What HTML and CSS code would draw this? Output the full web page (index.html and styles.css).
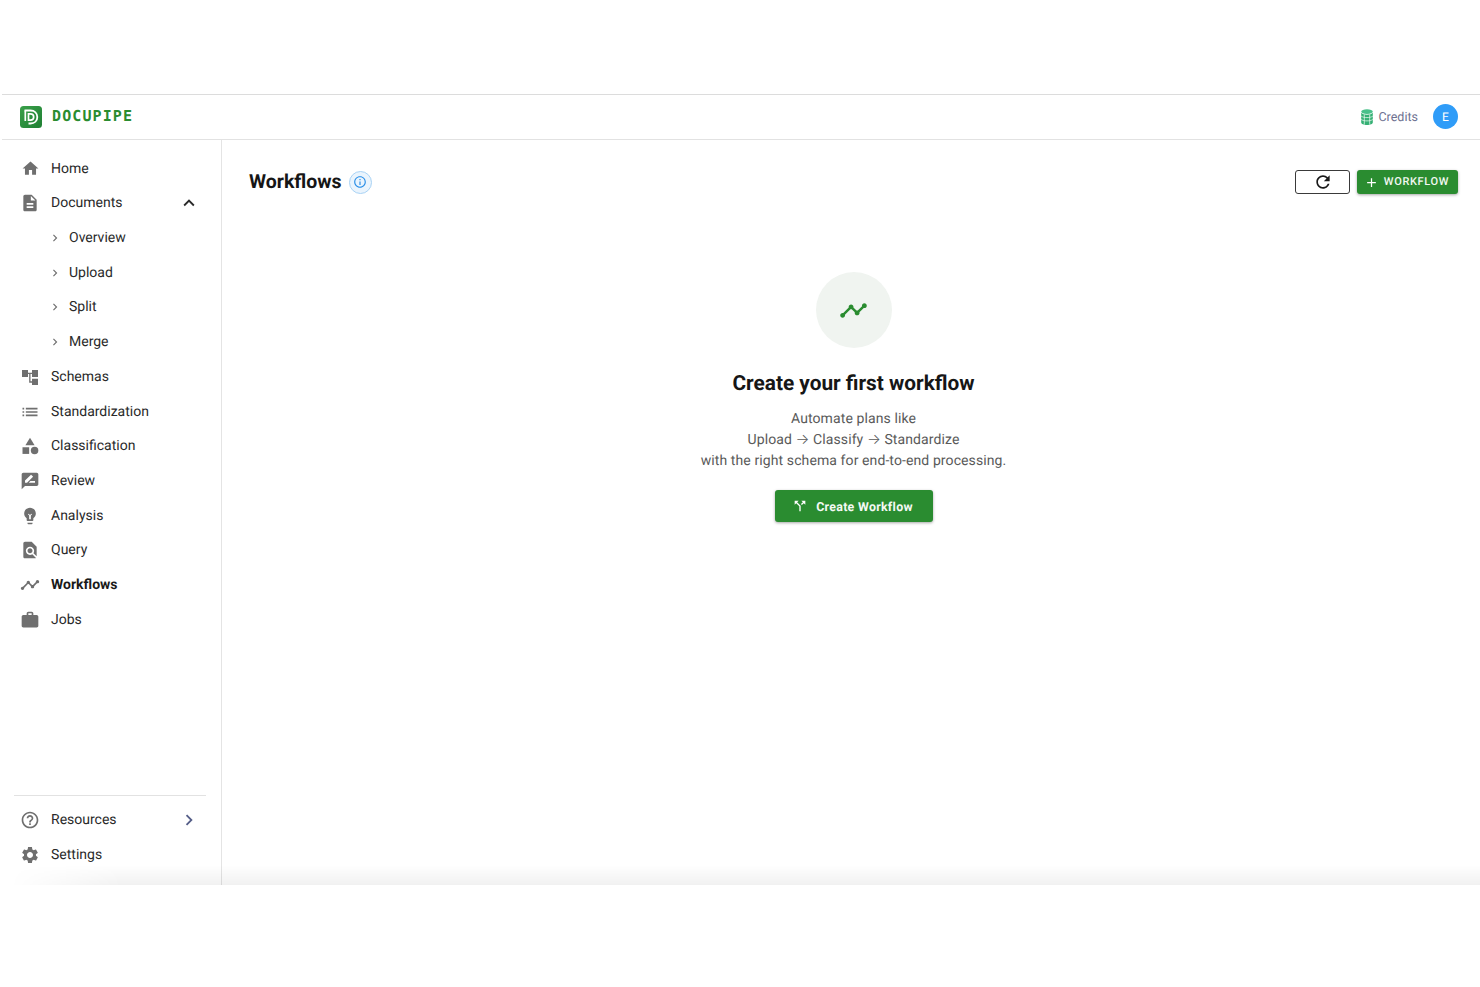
FILE: index.html
```html
<!DOCTYPE html>
<html lang="en">
<head>
<meta charset="utf-8">
<title>Workflows - DocuPipe</title>
<link rel="stylesheet" href="styles.css">
</head>
<body>
<div class="frame">
  <header class="topbar">
    <div class="brand">
      <svg class="logo" viewBox="0 0 22 22"><defs><linearGradient id="lg" x1="0" y1="0" x2="1" y2="1"><stop offset="0" stop-color="#3aa04a"/><stop offset="1" stop-color="#1f7f33"/></linearGradient></defs><rect width="22" height="22" rx="3.500" fill="url(#lg)"/><path d="M4.500 4.500h6c4 0 6.800 2.600 6.800 6.500s-2.800 6.500-6.800 6.500H8.500" fill="none" stroke="#fff" stroke-width="1.800"/><path d="M5.300 4.500v10.500M8.500 7.800h1.800c2 0 3.400 1.200 3.400 3.200s-1.400 3.200-3.400 3.200H8.500z" fill="none" stroke="#fff" stroke-width="1.700"/></svg>
      <span class="brand-name">DOCUPIPE</span>
    </div>
    <div class="top-actions">
      <svg class="credits-icon" viewBox="0 0 12 16"><ellipse cx="6" cy="2.600" rx="5.800" ry="2.400" fill="#49c08a"/><path d="M.2 3.800c1 1.200 3 1.900 5.800 1.900s4.800-.7 5.800-1.900v9.600c0 1.400-2.600 2.500-5.800 2.500S.2 14.800.2 13.400z" fill="#35b074"/><path d="M.2 7.200c1.500 1 3.500 1.400 5.800 1.400s4.300-.4 5.800-1.400M.2 10.500c1.500 1 3.500 1.400 5.800 1.400s4.300-.4 5.800-1.400M3.300 5.500v10M8.700 5.500v10" stroke="#e8f7ef" stroke-width=".75" fill="none"/></svg>
      <span class="credits">Credits</span>
      <span class="avatar">E</span>
    </div>
  </header>
  <div class="body">
    <aside class="sidebar">
      <nav class="nav">
        <a class="item"><svg class="ico home" viewBox="0 0 24 24"><path d="M10 20v-6h4v6h5v-8h3L12 3 2 12h3v8z"/></svg><span>Home</span></a>
        <a class="item"><svg class="ico" viewBox="0 0 24 24"><path d="M14 2H6c-1.100 0-1.990.9-1.990 2L4 20c0 1.100.89 2 1.990 2H18c1.100 0 2-.9 2-2V8l-6-6zm2 16H8v-2h8v2zm0-4H8v-2h8v2zm-3-5V3.500L18.500 9H13z"/></svg><span>Documents</span><svg class="end dark" viewBox="0 0 24 24"><path d="M12 8l-6 6 1.410 1.410L12 10.830l4.590 4.580L18 14z"/></svg></a>
        <a class="item sub"><svg class="chev" viewBox="0 0 24 24"><path d="M10 6L8.590 7.410 13.170 12l-4.580 4.590L10 18l6-6z"/></svg><span>Overview</span></a>
        <a class="item sub"><svg class="chev" viewBox="0 0 24 24"><path d="M10 6L8.590 7.410 13.170 12l-4.580 4.590L10 18l6-6z"/></svg><span>Upload</span></a>
        <a class="item sub"><svg class="chev" viewBox="0 0 24 24"><path d="M10 6L8.590 7.410 13.170 12l-4.580 4.590L10 18l6-6z"/></svg><span>Split</span></a>
        <a class="item sub"><svg class="chev" viewBox="0 0 24 24"><path d="M10 6L8.590 7.410 13.170 12l-4.580 4.590L10 18l6-6z"/></svg><span>Merge</span></a>
        <a class="item"><svg class="ico" viewBox="0 0 24 24"><path d="M2.400 3.600h7.200V12H2.400zM14.400 3.600h7.200V12h-7.200zM14.400 14h7.200v7.600h-7.200zM9.600 6.800h4.800v1.600h-1.800v8.800h1.800v1.600h-3.400V8.400H9.600z"/></svg><span>Schemas</span></a>
        <a class="item"><svg class="ico" viewBox="0 0 24 24"><path d="M3 13h2v-2H3v2zm0 4h2v-2H3v2zm0-8h2V7H3v2zm4 4h14v-2H7v2zm0 4h14v-2H7v2zM7 7v2h14V7H7z"/></svg><span>Standardization</span></a>
        <a class="item"><svg class="ico" viewBox="0 0 24 24"><path d="M12 2l-5.500 9h11z"/><circle cx="17.500" cy="17.500" r="4.500"/><path d="M3 13.500h8v8H3z"/></svg><span>Classification</span></a>
        <a class="item"><svg class="ico" viewBox="0 0 24 24"><path d="M20 2H4c-1.100 0-1.990.9-1.990 2L2 22l4-4h14c1.100 0 2-.9 2-2V4c0-1.100-.9-2-2-2zM6 14v-2.470l6.880-6.880c.2-.2.51-.2.71 0l1.770 1.770c.2.2.2.51 0 .71L8.470 14H6zm12 0h-7.500l2-2H18v2z"/></svg><span>Review</span></a>
        <a class="item"><svg class="ico" viewBox="0 0 24 24"><path fill-rule="evenodd" d="M9 21c0 .55.45 1 1 1h4c.55 0 1-.45 1-1v-1H9v1zm3-19C8.140 2 5 5.140 5 9c0 2.380 1.190 4.470 3 5.740V17c0 .55.45 1 1 1h6c.55 0 1-.45 1-1v-2.260c1.810-1.270 3-3.360 3-5.740 0-3.860-3.140-7-7-7zM11 16v-4.500L9.500 10l.8-.8 1.700 1.700 1.700-1.700.8.8L13 11.500V16z"/></svg><span>Analysis</span></a>
        <a class="item"><svg class="ico" viewBox="0 0 24 24"><path d="M20 19.590V8l-6-6H6c-1.100 0-1.990.9-1.990 2L4 20c0 1.100.89 2 1.990 2H18c.45 0 .85-.15 1.190-.4l-4.430-4.430c-.8.52-1.740.83-2.760.83-2.760 0-5-2.240-5-5s2.240-5 5-5 5 2.240 5 5c0 1.020-.31 1.960-.83 2.750L20 19.590zM9 13c0 1.660 1.340 3 3 3s3-1.340 3-3-1.340-3-3-3-3 1.340-3 3z"/></svg><span>Query</span></a>
        <a class="item active"><svg class="ico" viewBox="0 0 24 24"><path d="M23 8c0 1.100-.9 2-2 2-.18 0-.35-.02-.51-.07l-3.560 3.550c.05.16.07.34.07.52 0 1.100-.9 2-2 2s-2-.9-2-2c0-.18.02-.36.07-.52l-2.550-2.550c-.16.05-.34.07-.52.07s-.36-.02-.52-.07l-4.550 4.560c.05.16.07.33.07.51 0 1.100-.9 2-2 2s-2-.9-2-2 .9-2 2-2c.18 0 .35.02.51.07l4.560-4.550C8.020 9.360 8 9.180 8 9c0-1.100.9-2 2-2s2 .9 2 2c0 .18-.02.36-.07.52l2.550 2.550c.16-.05.34-.07.52-.07s.36.02.52.07l3.550-3.560C19.020 8.350 19 8.180 19 8c0-1.100.9-2 2-2s2 .9 2 2z"/></svg><span>Workflows</span></a>
        <a class="item"><svg class="ico" viewBox="0 0 24 24"><path d="M20 6h-4V4c0-1.110-.89-2-2-2h-4c-1.110 0-2 .89-2 2v2H4c-1.110 0-1.990.89-1.990 2L2 19c0 1.110.89 2 2 2h16c1.110 0 2-.89 2-2V8c0-1.110-.89-2-2-2zm-6 0h-4V4h4v2z"/></svg><span>Jobs</span></a>
      </nav>
      <div class="nav-bottom">
        <a class="item"><svg class="ico" viewBox="0 0 24 24"><path d="M11 18h2v-2h-2v2zm1-16C6.480 2 2 6.480 2 12s4.480 10 10 10 10-4.480 10-10S17.520 2 12 2zm0 18c-4.410 0-8-3.590-8-8s3.590-8 8-8 8 3.590 8 8-3.590 8-8 8zm0-14c-2.210 0-4 1.790-4 4h2c0-1.100.9-2 2-2s2 .9 2 2c0 2-3 1.750-3 5h2c0-2.250 3-2.500 3-5 0-2.210-1.790-4-4-4z"/></svg><span>Resources</span><svg class="end slate" viewBox="0 0 24 24"><path d="M10 6L8.590 7.410 13.170 12l-4.580 4.590L10 18l6-6z"/></svg></a>
        <a class="item"><svg class="ico" viewBox="0 0 24 24"><path d="M19.140 12.940c.04-.3.06-.61.06-.94 0-.32-.02-.64-.07-.94l2.030-1.580c.18-.14.23-.41.12-.61l-1.920-3.320c-.12-.22-.37-.29-.59-.22l-2.390.96c-.5-.38-1.030-.7-1.620-.94l-.36-2.540c-.04-.24-.24-.41-.48-.41h-3.840c-.24 0-.43.17-.47.41l-.36 2.540c-.59.24-1.130.57-1.620.94l-2.390-.96c-.22-.08-.47 0-.59.22L2.740 8.870c-.12.21-.08.47.12.61l2.030 1.580c-.05.3-.09.63-.09.94s.02.64.07.94l-2.030 1.580c-.18.14-.23.41-.12.61l1.920 3.320c.12.22.37.29.59.22l2.390-.96c.5.38 1.030.7 1.620.94l.36 2.540c.05.24.24.41.48.41h3.840c.24 0 .44-.17.47-.41l.36-2.540c.59-.24 1.130-.56 1.620-.94l2.390.96c.22.08.47 0 .59-.22l1.920-3.320c.12-.22.07-.47-.12-.61l-2.010-1.580zM12 15.600c-1.980 0-3.600-1.620-3.600-3.600s1.620-3.600 3.600-3.600 3.600 1.620 3.600 3.600-1.620 3.600-3.600 3.600z"/></svg><span>Settings</span></a>
      </div>
    </aside>
    <main class="main">
      <div class="page-head">
        <div class="title-wrap">
          <h1 class="title">Workflows</h1>
          <span class="info"><svg viewBox="0 0 24 24"><path d="M11 7h2v2h-2zm0 4h2v6h-2zm1-9C6.480 2 2 6.480 2 12s4.480 10 10 10 10-4.480 10-10S17.520 2 12 2zm0 18c-4.410 0-8-3.590-8-8s3.590-8 8-8 8 3.590 8 8-3.590 8-8 8z"/></svg></span>
        </div>
        <div class="head-actions">
          <button class="refresh"><svg viewBox="0 0 24 24"><path d="M17.650 6.350C16.200 4.900 14.210 4 12 4c-4.420 0-7.990 3.580-7.990 8s3.570 8 7.990 8c3.730 0 6.840-2.550 7.730-6h-2.080c-.82 2.330-3.040 4-5.650 4-3.310 0-6-2.690-6-6s2.690-6 6-6c1.660 0 3.140.69 4.220 1.780L13 11h7V4l-2.350 2.350z"/></svg></button>
          <button class="add"><svg viewBox="0 0 24 24"><path d="M19 13h-6v6h-2v-6H5v-2h6V5h2v6h6v2z"/></svg><span class="add-label">WORKFLOW</span></button>
        </div>
      </div>
      <section class="empty">
        <div class="empty-icon"><svg viewBox="0 0 24 24"><path d="M23 8c0 1.100-.9 2-2 2-.18 0-.35-.02-.51-.07l-3.560 3.550c.05.16.07.34.07.52 0 1.100-.9 2-2 2s-2-.9-2-2c0-.18.02-.36.07-.52l-2.550-2.550c-.16.05-.34.07-.52.07s-.36-.02-.52-.07l-4.550 4.560c.05.16.07.33.07.51 0 1.100-.9 2-2 2s-2-.9-2-2 .9-2 2-2c.18 0 .35.02.51.07l4.560-4.550C8.020 9.360 8 9.180 8 9c0-1.100.9-2 2-2s2 .9 2 2c0 .18-.02.36-.07.52l2.550 2.550c.16-.05.34-.07.52-.07s.36.02.52.07l3.550-3.560C19.020 8.350 19 8.180 19 8c0-1.100.9-2 2-2s2 .9 2 2z"/></svg></div>
        <h2 class="empty-title">Create your first workflow</h2>
        <p class="empty-text">Automate plans like<br>Upload <span class="arrow">→</span> Classify <span class="arrow">→</span> Standardize<br>with the right schema for end-to-end processing.</p>
        <button class="create"><svg viewBox="0 0 24 24"><path d="M14 4l2.290 2.290-2.880 2.880 1.420 1.420 2.880-2.880L20 10V4zm-4 0H4v6l2.290-2.290 4.710 4.700V20h2v-8.410l-5.290-5.300z"/></svg><span class="create-label">Create Workflow</span></button>
      </section>
    </main>
  </div>
  <div class="fade"></div>
</div>
</body>
</html>
```

FILE: styles.css
```css
* { box-sizing: border-box; }
html, body { margin: 0; padding: 0; background: #fff; }
body {
  font-family: Roboto, "Liberation Sans", sans-serif;
  color: #1c1c1c;
  height: 987px;
  overflow: hidden;
  padding-top: 94px;
  text-rendering: geometricPrecision;
}
.frame {
  position: relative;
  margin-left: 2px;
  height: 791px;
  border-top: 1px solid #dcdcdc;
  display: flex;
  flex-direction: column;
}
.topbar {
  height: 45px;
  flex: none;
  border-bottom: 1px solid #e2e2e2;
  display: flex;
  align-items: center;
  justify-content: space-between;
  padding: 0 22px 1px 18px;
}
.brand { display: flex; align-items: center; gap: 10px; }
.logo { width: 22px; height: 22px; display: block; }
.brand-name {
  font-family: "DejaVu Sans Mono", "Liberation Mono", monospace;
  font-weight: 700;
  font-size: 15px;
  letter-spacing: 1.100px;
  color: #2a8c30;
  padding-bottom: 2px;
}
.top-actions { display: flex; align-items: center; }
.credits-icon { width: 12px; height: 16px; margin-right: 5px; }
.credits { font-size: 12.500px; color: #6d7191; margin-right: 15px; padding-top: 1px; }
.avatar {
  width: 25px; height: 25px; border-radius: 50%;
  background: #2f9cf8; color: #fff;
  font-size: 12px;
  display: flex; align-items: center; justify-content: center;
}
.body { flex: 1; display: flex; min-height: 0; }
.sidebar {
  width: 220px;
  flex: none;
  border-right: 1px solid #e4e4e4;
  padding: 11.200px 15px 13px 12px;
  display: flex;
  flex-direction: column;
  justify-content: space-between;
}
.item {
  height: 34.720px;
  display: flex;
  align-items: center;
  padding-left: 6px;
  font-size: 14px;
  color: #2a2a2a;
}
.ico { width: 20px; height: 20px; fill: #6f6f6f; flex: none; margin-right: 11px; }
.ico.home { width: 19px; height: 19px; margin-left: .5px; margin-right: 11.500px; }
.item.sub { padding-left: 34px; }
.chev { width: 14px; height: 14px; fill: #6f6f6f; margin-right: 7px; flex: none; }
.item.active { font-weight: 700; color: #1a1a1a; }
.end { width: 22px; height: 22px; margin-left: auto; margin-right: 6px; flex: none; }
.end.dark { fill: #2a2a2a; }
.end.slate { fill: #555e88; }
.nav-bottom { border-top: 1px solid #e2e2e2; padding-top: 7px; }
.main { flex: 1; min-width: 0; padding: 30px 22px 0 27px; }
.page-head { display: flex; align-items: flex-start; justify-content: space-between; height: 24px; }
.title-wrap { display: flex; align-items: center; gap: 7px; height: 24px; }
.title { margin: 0; font-size: 19.500px; font-weight: 700; line-height: 24px; color: #161616; }
.info {
  width: 23px; height: 23px; border-radius: 50%;
  background: #eaf4fd; border: 1px solid #a9d3f5;
  display: flex; align-items: center; justify-content: center;
}
.info svg { width: 14px; height: 14px; fill: #2a8fe8; }
.head-actions { display: flex; gap: 7px; }
button { font-family: inherit; text-rendering: inherit; cursor: pointer; }
.refresh {
  width: 55px; height: 24px; padding: 0;
  background: #fff; border: 1px solid #3a3a3a; border-radius: 3px;
  display: flex; align-items: center; justify-content: center;
}
.refresh svg { width: 20px; height: 20px; fill: #1a1a1a; }
.add {
  width: 101px; height: 24px; padding: 0 2px 0 0;
  background: #2a8c30; color: #f2f8f2; border: 0; border-radius: 3px;
  font-size: 11px; font-weight: 500; letter-spacing: .65px;
  display: flex; align-items: center; justify-content: center; gap: 5px;
  box-shadow: 0 1px 3px rgba(0,0,0,.35);
}
.add-label { padding-bottom: 2px; }
.add svg { width: 15px; height: 15px; fill: #fff; }
.empty { display: flex; flex-direction: column; align-items: center; padding-top: 78px; }
.empty-icon {
  width: 76px; height: 76px; border-radius: 50%;
  background: #f0f4f0;
  display: flex; align-items: center; justify-content: center;
}
.empty-icon svg { width: 29px; height: 29px; fill: #2a8c30; }
.empty-title { margin: 24px 0 0; font-size: 20.800px; font-weight: 700; line-height: 24px; color: #161616; }
.empty-text { margin: 13px 0 0; font-size: 14px; line-height: 20.800px; color: #5a5a5a; text-align: center; letter-spacing: .1px; }
.arrow { font-family: Inter, "Liberation Sans", sans-serif; font-size: 14.500px; font-weight: 300; line-height: 1; }
.create {
  margin-top: 19px;
  width: 158px; height: 32px; padding: 0 2px 0 0;
  background: #2a8c30; color: #f4f9f4; border: 0; border-radius: 3px;
  font-size: 12.400px; font-weight: 700; letter-spacing: .28px;
  display: flex; align-items: center; justify-content: center; gap: 8px;
  box-shadow: 0 1px 3px rgba(0,0,0,.35);
}
.create-label { padding-top: 2px; }
.create svg { width: 16px; height: 16px; fill: #fff; }
.fade {
  position: absolute;
  left: 0; right: 0; bottom: 0;
  height: 20px;
  pointer-events: none;
  background: linear-gradient(to bottom, rgba(0,0,0,0), rgba(0,0,0,.055));
  -webkit-mask-image: linear-gradient(to right, transparent 8px, #000 120px);
  mask-image: linear-gradient(to right, transparent 8px, #000 120px);
}
```
